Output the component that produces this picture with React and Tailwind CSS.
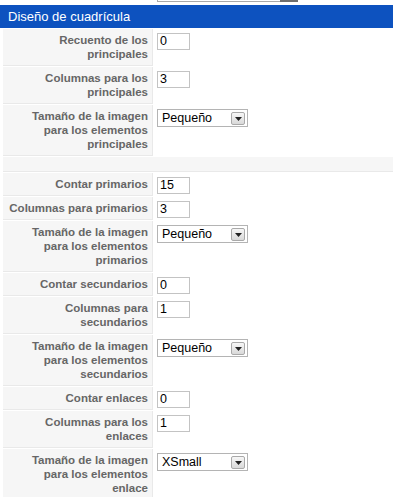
import React from "react";

const rows = [
  { lines: ["Recuento de los", "principales"], type: "input", value: "0" },
  { lines: ["Columnas para los", "principales"], type: "input", value: "3" },
  { lines: ["Tamaño de la imagen", "para los elementos", "principales"], type: "select", value: "Pequeño" },
  { sep: true },
  { lines: ["Contar primarios"], type: "input", value: "15" },
  { lines: ["Columnas para primarios"], type: "input", value: "3" },
  { lines: ["Tamaño de la imagen", "para los elementos", "primarios"], type: "select", value: "Pequeño" },
  { lines: ["Contar secundarios"], type: "input", value: "0" },
  { lines: ["Columnas para", "secundarios"], type: "input", value: "1" },
  { lines: ["Tamaño de la imagen", "para los elementos", "secundarios"], type: "select", value: "Pequeño" },
  { lines: ["Contar enlaces"], type: "input", value: "0" },
  { lines: ["Columnas para los", "enlaces"], type: "input", value: "1" },
  { lines: ["Tamaño de la imagen", "para los elementos", "enlace"], type: "select", value: "XSmall" },
];

function TextBox({ value }) {
  return (
    <div className="w-[33px] h-[17px] border border-[#c3c3c3] bg-white flex items-center pl-[2px] text-[12.5px] leading-[15px] text-black">
      {value}
    </div>
  );
}

function SelectBox({ value }) {
  return (
    <div className="w-[91px] h-[18px] border border-[#b4b4b4] bg-white flex items-center pl-[4px] pr-[2px] text-[12.5px] leading-[15px] text-black">
      <span className="flex-1">{value}</span>
      <div className="w-[14px] h-[13px] mt-[1px] border border-[#a9a9a9] rounded-[2px] bg-gradient-to-b from-[#f7f7f7] to-[#d9d9d9] flex items-center justify-center">
        <svg width="7" height="4" viewBox="0 0 7 4">
          <path d="M0 0 H7 L3.5 4 Z" fill="#222" />
        </svg>
      </div>
    </div>
  );
}

export default function App() {
  return (
    <div className="w-[397px] h-[497px] overflow-hidden bg-white font-['Liberation_Sans',Arial,sans-serif]">
      <div className="h-[5px]">
        <div className="ml-[157px] w-[141px] h-[2px] flex">
          <div className="flex-1 border-l border-b border-[#a9a9a9]" />
          <div className="w-[18px] bg-[#6e6e6e]" />
        </div>
      </div>
      <div className="w-[393px] h-[23px] bg-[#0d52bf] text-white text-[13px] pl-[8px] flex items-center">
        Diseño de cuadrícula
      </div>
      <div className="w-[393px] pt-[1px] pl-[3px] flex flex-col gap-[1px]">
        {rows.map((r, i) =>
          r.sep ? (
            <div key={i} className="h-[15px] bg-[#f6f6f6] border-b border-[#e9e9e9]" />
          ) : (
            <div key={i} className="flex gap-[1px]">
              <div className="w-[150px] shrink-0 bg-[#f6f6f6] border-r border-b border-[#e9e9e9] py-[4px] pr-[4px] pl-[3px] text-right font-bold text-[11.5px] leading-[14px] text-[#666]">
                {r.lines.map((l, j) => (
                  <div key={j} className="whitespace-nowrap">{l}</div>
                ))}
              </div>
              <div className="flex-1 pt-[4px] pl-[3px]">
                {r.type === "input" ? <TextBox value={r.value} /> : <SelectBox value={r.value} />}
              </div>
            </div>
          )
        )}
      </div>
    </div>
  );
}
